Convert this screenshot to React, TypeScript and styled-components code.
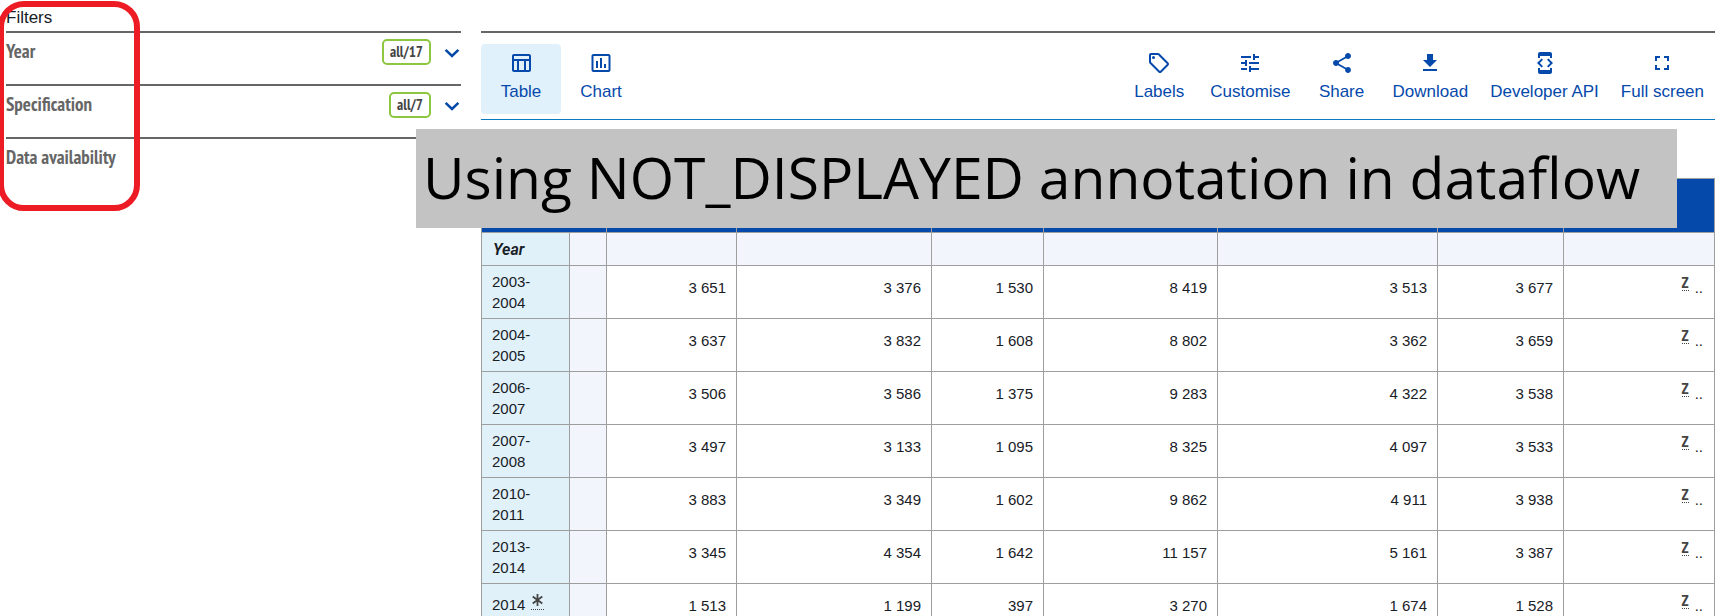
import React from "react";
import styled, { createGlobalStyle } from "styled-components";
import {
  MdOutlineTableChart,
  MdInsertChartOutlined,
  MdOutlineLocalOffer,
  MdTune,
  MdShare,
  MdGetApp,
  MdDeveloperMode,
  MdFullscreen,
} from "react-icons/md";

const blue = "#0549ab";
const line = "#666666";
const sans = `"Liberation Sans", Arial, sans-serif`;
const narrow = `"PT Sans Narrow", "Liberation Sans Narrow", "Open Sans Condensed", "Liberation Sans", sans-serif`;

const GlobalStyle = createGlobalStyle`
  * { box-sizing: border-box; }
  body { margin: 0; background: #fff; color: #182026; font-family: ${sans}; }
`;

const Page = styled.div`
  position: relative;
  height: 100vh;
  overflow: hidden;
  display: grid;
  grid-template-columns: 455fr 1234fr;
  column-gap: 20px;
  align-items: start;
  padding: 0 19px 0 6px;
`;

const FiltersTitle = styled.h2`
  margin: 0;
  padding-top: 7px;
  height: 31px;
  font-size: 17px;
  font-weight: 400;
  line-height: 22px;
`;

const FilterRow = styled.section`
  display: flex;
  align-items: flex-start;
  justify-content: space-between;
  height: 53px;
  padding-top: 6px;
  border-top: 2px solid ${line};
`;

const FilterName = styled.h3`
  margin: 0;
  font-family: ${narrow};
  font-size: 19px;
  line-height: 24px;
  font-weight: 700;
  color: ${line};
`;

const Toggle = styled.button`
  display: flex;
  align-items: center;
  gap: 13px;
  border: 0;
  padding: 0 1px 0 0;
  background: none;
  cursor: pointer;
`;

const Badge = styled.span`
  border: 2px solid #8dc63f;
  border-radius: 5px;
  padding: 0 6px;
  font-family: ${narrow};
  font-size: 15px;
  line-height: 22px;
  font-weight: 700;
  color: #444;
`;

const Main = styled.main`
  margin-top: 31px;
  border-top: 2px solid ${line};
`;

const Toolbar = styled.div`
  display: flex;
  justify-content: space-between;
  padding: 11px 0 5px;
  border-bottom: 1px solid #0b7bc1;
`;

const ToolGroup = styled.div`
  display: flex;
`;

const ToolButton = styled.button<{ $active?: boolean }>`
  display: flex;
  flex-direction: column;
  align-items: center;
  gap: 4px;
  min-width: 80px;
  height: 70px;
  padding: 7px 11px;
  border: 0;
  border-radius: 4px;
  background: ${(p) => (p.$active ? "#e1f1fb" : "transparent")};
  color: ${blue};
  font-family: ${sans};
  font-size: 17px;
  line-height: 25px;
  white-space: nowrap;
  cursor: pointer;
`;

const DataTable = styled.table`
  width: 100%;
  margin-top: 58px;
  table-layout: fixed;
  border-collapse: collapse;
  font-size: 15px;
  line-height: 21px;

  th, td { border: 1px solid #9e9e9e; }
`;

const HeadCell = styled.th`
  height: 54px;
  padding: 0;
  background: ${blue};
`;

const SubHeadCell = styled.td`
  height: 33px;
  padding: 0;
  background: #f2f5fb;
`;

const DimensionCell = styled.th`
  padding: 0 11px;
  background: #e1f1fa;
  text-align: left;
  font-family: Roboto, sans-serif;
  font-size: 16px;
  font-style: italic;
  font-weight: 600;
`;

const YearCell = styled.th`
  padding: 5px 10px;
  background: #e1f1fa;
  text-align: left;
  vertical-align: top;
  font-weight: 400;
`;

const SpacerCell = styled.td`
  background: #f2f5fb;
`;

const ValueCell = styled.td`
  padding: 11px 10px 0;
  height: 53px;
  text-align: right;
  vertical-align: top;
`;

const FlaggedCell = styled(ValueCell)`
  padding: 9px 11px 0;
`;

const Flag = styled.sup`
  display: inline-block;
  margin-right: 6px;
  border-bottom: 1px dotted #444;
  font-family: ${narrow};
  font-size: 16px;
  line-height: 15px;
  font-weight: 700;
  vertical-align: 5px;
  color: #444;
`;

const Star = styled.sup`
  display: inline-flex;
  height: 21px;
  margin-left: 6px;
  padding-top: 5px;
  align-items: flex-start;
  border-bottom: 1px dotted #444;
  vertical-align: 4px;
`;

const Highlight = styled.div`
  position: absolute;
  left: -2px;
  top: 1px;
  width: 142px;
  height: 210px;
  border: 6px solid #ed1c24;
  border-radius: 26px;
  pointer-events: none;
`;

const Banner = styled.div`
  position: absolute;
  left: 416px;
  right: 57px;
  top: 129px;
  height: 99px;
  padding-left: 7px;
  background: #c3c3c3;
  color: #000;
  font-family: "Segoe UI", "Open Sans", "Noto Sans", sans-serif;
  font-size: 57px;
  line-height: 96px;
  white-space: nowrap;
`;

const Chevron = () => (
  <svg width="16" height="16" viewBox="0 0 16 16" aria-hidden="true">
    <path d="M1.6 5.8 8 12l6.4-6.2" fill="none" stroke={blue} strokeWidth="2.5" />
  </svg>
);

const Asterisk = () => (
  <svg width="13" height="12" viewBox="0 0 13 12" role="img" aria-label="Note">
    <path d="M6.5 0v12M1.7 2.6l9.6 6.8M11.3 2.6 1.7 9.4" fill="none" stroke="#444" strokeWidth="1.8" />
  </svg>
);

const filters = [
  { name: "Year", count: "all/17" },
  { name: "Specification", count: "all/7" },
  { name: "Data availability" },
];

const actions = [
  { label: "Labels", Icon: MdOutlineLocalOffer },
  { label: "Customise", Icon: MdTune },
  { label: "Share", Icon: MdShare },
  { label: "Download", Icon: MdGetApp },
  { label: "Developer API", Icon: MdDeveloperMode },
  { label: "Full screen", Icon: MdFullscreen },
];

const columns = [88, 37, 130, 195, 112, 174, 220, 126, 151];
const columnTotal = columns.reduce((a, b) => a + b, 0);

const rows = [
  { year: "2003-2004", values: ["3 651", "3 376", "1 530", "8 419", "3 513", "3 677"] },
  { year: "2004-2005", values: ["3 637", "3 832", "1 608", "8 802", "3 362", "3 659"] },
  { year: "2006-2007", values: ["3 506", "3 586", "1 375", "9 283", "4 322", "3 538"] },
  { year: "2007-2008", values: ["3 497", "3 133", "1 095", "8 325", "4 097", "3 533"] },
  { year: "2010-2011", values: ["3 883", "3 349", "1 602", "9 862", "4 911", "3 938"] },
  { year: "2013-2014", values: ["3 345", "4 354", "1 642", "11 157", "5 161", "3 387"] },
  { year: "2014", note: true, values: ["1 513", "1 199", "397", "3 270", "1 674", "1 528"] },
];

export default function App() {
  return (
    <Page>
      <GlobalStyle />
      <aside>
        <FiltersTitle>Filters</FiltersTitle>
        {filters.map((f) => (
          <FilterRow key={f.name}>
            <FilterName>{f.name}</FilterName>
            {f.count && (
              <Toggle aria-label={`${f.name} ${f.count}`}>
                <Badge>{f.count}</Badge>
                <Chevron />
              </Toggle>
            )}
          </FilterRow>
        ))}
      </aside>
      <Main>
        <Toolbar>
          <ToolGroup>
            <ToolButton $active>
              <MdOutlineTableChart size={24} />
              Table
            </ToolButton>
            <ToolButton>
              <MdInsertChartOutlined size={24} />
              Chart
            </ToolButton>
          </ToolGroup>
          <ToolGroup>
            {actions.map(({ label, Icon }) => (
              <ToolButton key={label}>
                <Icon size={24} />
                {label}
              </ToolButton>
            ))}
          </ToolGroup>
        </Toolbar>
        <DataTable>
          <colgroup>
            {columns.map((w, i) => (
              <col key={i} style={{ width: `${(w / columnTotal) * 100}%` }} />
            ))}
          </colgroup>
          <thead>
            <tr>
              <HeadCell colSpan={2} />
              {columns.slice(2).map((_, i) => (
                <HeadCell key={i} />
              ))}
            </tr>
            <tr>
              <DimensionCell>Year</DimensionCell>
              {columns.slice(1).map((_, i) => (
                <SubHeadCell key={i} />
              ))}
            </tr>
          </thead>
          <tbody>
            {rows.map((r) => (
              <tr key={r.year}>
                <YearCell scope="row">
                  {r.year}
                  {r.note && (
                    <Star>
                      <Asterisk />
                    </Star>
                  )}
                </YearCell>
                <SpacerCell />
                {r.values.map((v, i) => (
                  <ValueCell key={i}>{v}</ValueCell>
                ))}
                <FlaggedCell>
                  <Flag>Z</Flag>..
                </FlaggedCell>
              </tr>
            ))}
          </tbody>
        </DataTable>
      </Main>
      <Highlight />
      <Banner>Using NOT_DISPLAYED annotation in dataflow</Banner>
    </Page>
  );
}
